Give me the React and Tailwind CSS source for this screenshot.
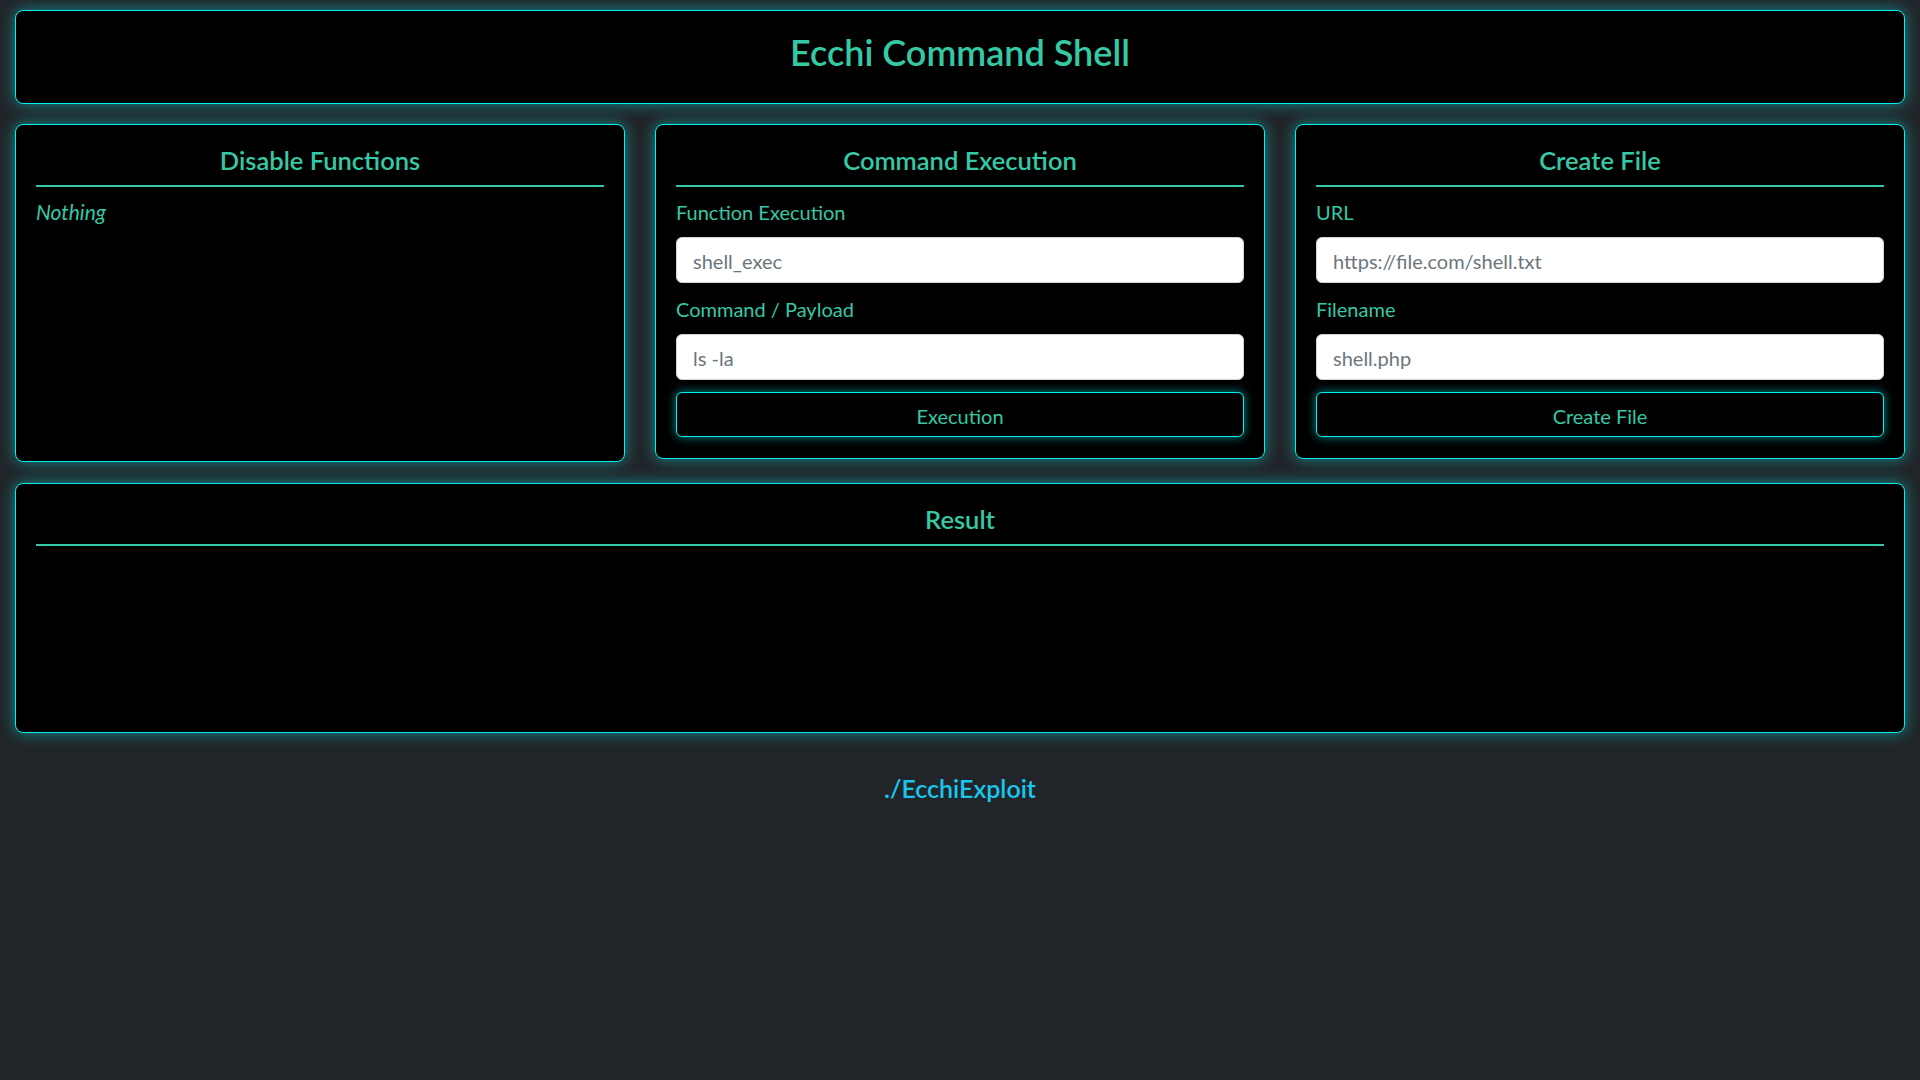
const font = { fontFamily: '"Lato", "Open Sans", sans-serif' }

const Panel = ({ title, className = '', children }) => (
  <div
    className={`bg-black border border-[#00f0f0] rounded-lg shadow-[0_0_15px_rgba(0,240,240,0.5)] p-5 ${className}`}
  >
    <h4 className="mt-[1px] text-center text-[25.5px] leading-[29px] font-semibold text-[#35c9a5]">{title}</h4>
    <div className="mt-[10px] h-[2px] bg-[#35c9a5]" />
    {children}
  </div>
)

const Field = ({ label, placeholder, first }) => (
  <>
    <label className={`block ${first ? 'mt-[13px]' : 'mt-[14px]'} text-[20px] leading-[24px] text-[#35c9a5]`}>
      {label}
    </label>
    <input
      type="text"
      placeholder={placeholder}
      style={font}
      className="mt-[13px] block w-full h-[46px] px-4 pt-[2px] rounded-md bg-white border border-[#ced4da] text-[20px] text-[#212529] placeholder:text-[#6c757d] outline-none"
    />
  </>
)

const GlowButton = ({ children }) => (
  <button
    type="button"
    style={font}
    className="mt-[12px] w-full h-[45px] pt-[2px] rounded-md bg-black border border-[#00f0f0] shadow-[0_0_10px_rgba(0,240,240,0.6)] text-[20px] text-[#35c9a5]"
  >
    {children}
  </button>
)

export default function App() {
  return (
    <div style={font} className="min-h-screen bg-[#212529] px-[15px] pt-[10px]">
      {/* Header */}
      <div className="h-[94px] bg-black border border-[#00f0f0] rounded-lg shadow-[0_0_15px_rgba(0,240,240,0.5)] pt-[21px]">
        <h1 className="text-center text-[36px] leading-[40px] font-semibold text-[#35c9a5]">Ecchi Command Shell</h1>
      </div>

      {/* Tools */}
      <div className="mt-[20px] grid grid-cols-3 gap-[30px] items-start">
        <Panel title="Disable Functions" className="h-[338px]">
          <p className="mt-[13px] text-[21px] leading-[24px] italic text-[#35c9a5]">Nothing</p>
        </Panel>

        <Panel title="Command Execution" className="h-[335px]">
          <Field label="Function Execution" placeholder="shell_exec" first />
          <Field label="Command / Payload" placeholder="ls -la" />
          <GlowButton>Execution</GlowButton>
        </Panel>

        <Panel title="Create File" className="h-[335px]">
          <Field label="URL" placeholder="https://file.com/shell.txt" first />
          <Field label="Filename" placeholder="shell.php" />
          <GlowButton>Create File</GlowButton>
        </Panel>
      </div>

      {/* Output */}
      <Panel title="Result" className="mt-[21px] h-[250px]">
        <pre className="mt-3 text-[#35c9a5]"></pre>
      </Panel>

      <footer className="pt-[40px] pb-10 text-center">
        <span className="text-[25px] leading-[30px] font-semibold text-[#1bc6ec]">./EcchiExploit</span>
      </footer>
    </div>
  )
}
